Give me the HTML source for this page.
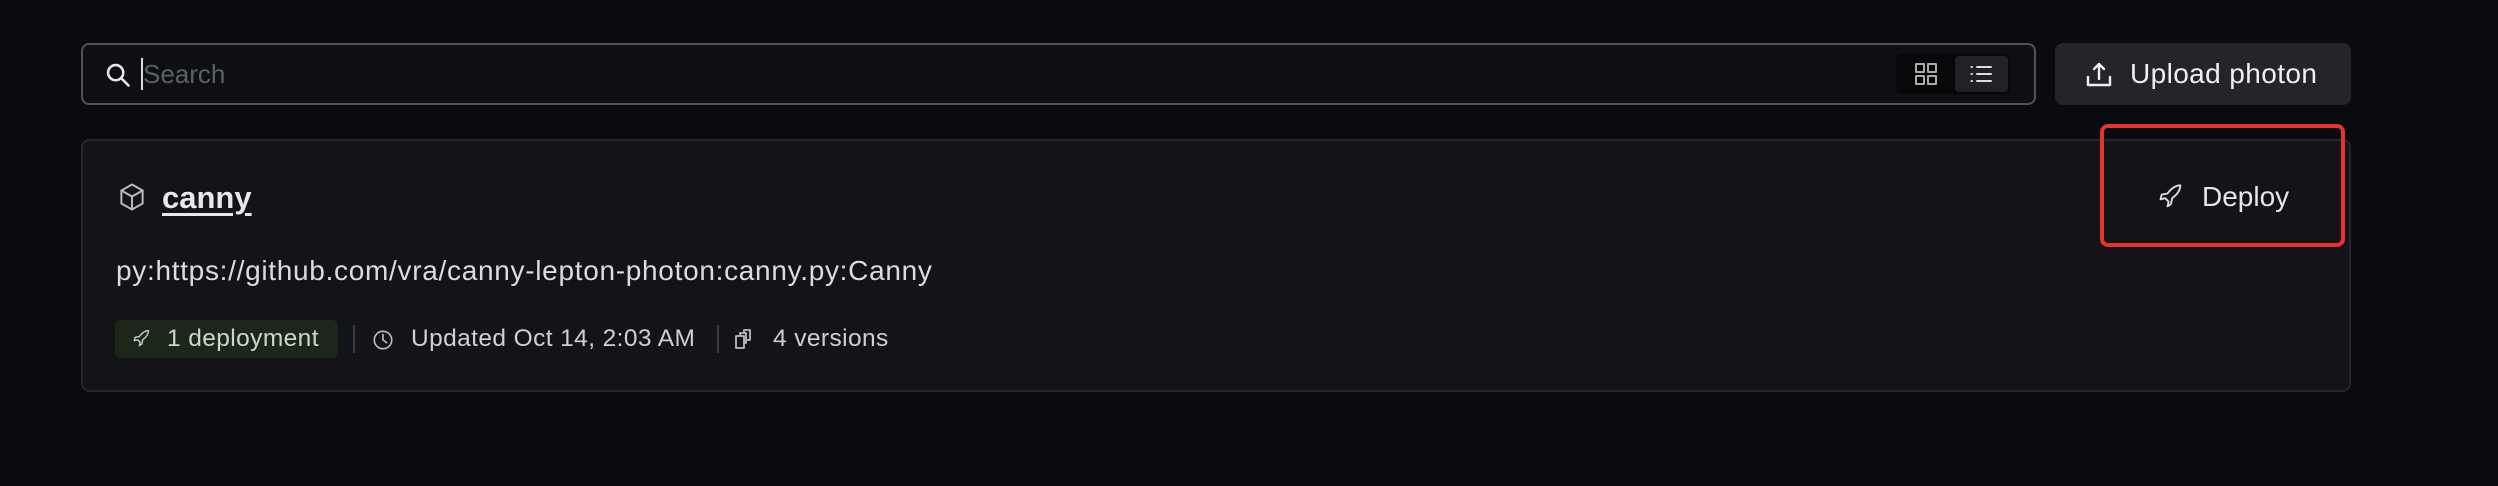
<!DOCTYPE html>
<html><head><meta charset="utf-8"><style>
*{margin:0;padding:0;box-sizing:border-box}
body{width:2498px;height:486px;background:#0a0b0e;font-family:"Liberation Sans",sans-serif;position:relative;overflow:hidden;color:#e6e6e8}
.abs{position:absolute}
.search{left:81px;top:43px;width:1955px;height:62px;border:2px solid #505257;border-radius:8px;background:#0e0f12}
.ph{left:143px;top:56px;font-size:26px;color:#5c5f66;line-height:36px}
.cursor{left:141px;top:58px;width:2px;height:32px;background:#ddd}
.toggle{left:1896px;top:54px;width:114px;height:40px;background:#070809;border-radius:6px}
.lb{left:1955px;top:56px;width:53px;height:36px;background:#202228;border-radius:4px}
.upload{left:2055px;top:43px;width:296px;height:62px;background:#23252b;border-radius:8px}
.upt{left:2130px;top:55px;font-size:28px;letter-spacing:0.4px;color:#f0f0f2;line-height:38px}
.card{left:81px;top:139px;width:2270px;height:253px;background:#131418;border:2px solid #25272c;border-radius:8px}
.title{left:162px;top:179px;font-size:31px;font-weight:bold;color:#e8e8ea;text-decoration:underline;text-underline-offset:5px;line-height:38px}
.url{left:116px;top:253px;font-size:28px;letter-spacing:0.7px;color:#dcdcde;line-height:36px}
.badge{left:115px;top:320px;width:223px;height:38px;background:#1d2719;border-radius:6px}
.meta{font-size:24.5px;letter-spacing:0.4px;color:#d0d0d3;line-height:38px;top:320px}
.sep{width:2px;height:28px;background:#3a3c41;top:325px}
.red{left:2100px;top:124px;width:245px;height:123px;border:4px solid #e8322a;border-radius:8px}
.dep{left:2202px;top:178px;font-size:28px;color:#e6e6e8;line-height:38px}
svg{position:absolute;fill:none;stroke-linecap:round;stroke-linejoin:round}
</style></head><body>
<div class="abs search"></div>
<svg style="left:104px;top:61px" width="28" height="28" viewBox="0 0 24 24" stroke="#e6e6e6" stroke-width="2.2"><circle cx="10" cy="10" r="6.5"/><path d="M15 15l6 6"/></svg>
<div class="abs cursor"></div>
<div class="abs ph">Search</div>
<div class="abs toggle"></div>
<div class="abs lb"></div>
<svg style="left:1914px;top:62px" width="24" height="24" viewBox="0 0 24 24" stroke="#aaa" stroke-width="2"><rect x="2" y="2" width="8" height="8"/><rect x="14" y="2" width="8" height="8"/><rect x="2" y="14" width="8" height="8"/><rect x="14" y="14" width="8" height="8"/></svg>
<svg style="left:1969px;top:62px" width="24" height="24" viewBox="0 0 24 24" stroke="#ddd" stroke-width="2"><path d="M8 5h14M8 12h14M8 19h14M2.5 5h.5M2.5 12h.5M2.5 19h.5"/></svg>
<div class="abs upload"></div>
<svg style="left:2086px;top:60px" width="26" height="28" viewBox="0 0 26 28" stroke="#f0f0f0" stroke-width="2.4"><path d="M13 4v15M8 9l5-5 5 5M2 17v8h22v-8"/></svg>
<div class="abs upt">Upload photon</div>
<div class="abs card"></div>
<svg style="left:117px;top:182px" width="30" height="30" viewBox="0 0 24 24" stroke="#bbb" stroke-width="1.6"><path d="M12 2l8.5 4.8v10.4L12 22l-8.5-4.8V6.8z"/><path d="M3.5 6.8L12 11.6l8.5-4.8M12 11.6V22"/></svg>
<div class="abs title">canny</div>
<div class="abs url">py:https://github.com/vra/canny-lepton-photon:canny.py:Canny</div>
<div class="abs badge"></div>
<svg style="left:131px;top:329px" width="20" height="20" viewBox="0 0 24 24" stroke="#bfc7b8" stroke-width="1.8"><path d="M4 14l4-1 3 3-1 4 3-2 1-5c4-3 7-7 7-11-4 0-8 3-11 7l-5 1z"/></svg>
<div class="abs meta" style="left:167px;color:#cfd6c8">1 deployment</div>
<div class="abs sep" style="left:353px"></div>
<svg style="left:372px;top:329px" width="22" height="22" viewBox="0 0 24 24" stroke="#bbb" stroke-width="1.8"><circle cx="12" cy="12" r="9.5"/><path d="M12 6v6l4 3"/></svg>
<div class="abs meta" style="left:411px">Updated Oct 14, 2:03 AM</div>
<div class="abs sep" style="left:717px"></div>
<svg style="left:734px;top:328px" width="20" height="22" viewBox="0 0 20 22" stroke="#bbb" stroke-width="1.8"><rect x="2" y="8" width="8" height="12"/><path d="M6 8V5h6v10h-2M10 5V2h6v10h-4"/></svg>
<div class="abs meta" style="left:773px">4 versions</div>
<div class="abs red"></div>
<svg style="left:2157px;top:183px" width="28" height="28" viewBox="0 0 24 24" stroke="#ddd" stroke-width="1.6"><path d="M3 14l4-1 3 3-1 4 3-2 1-5c4-3 7-7 7-11-4 0-8 3-11 7l-5 1z"/></svg>
<div class="abs dep">Deploy</div>
</body></html>
